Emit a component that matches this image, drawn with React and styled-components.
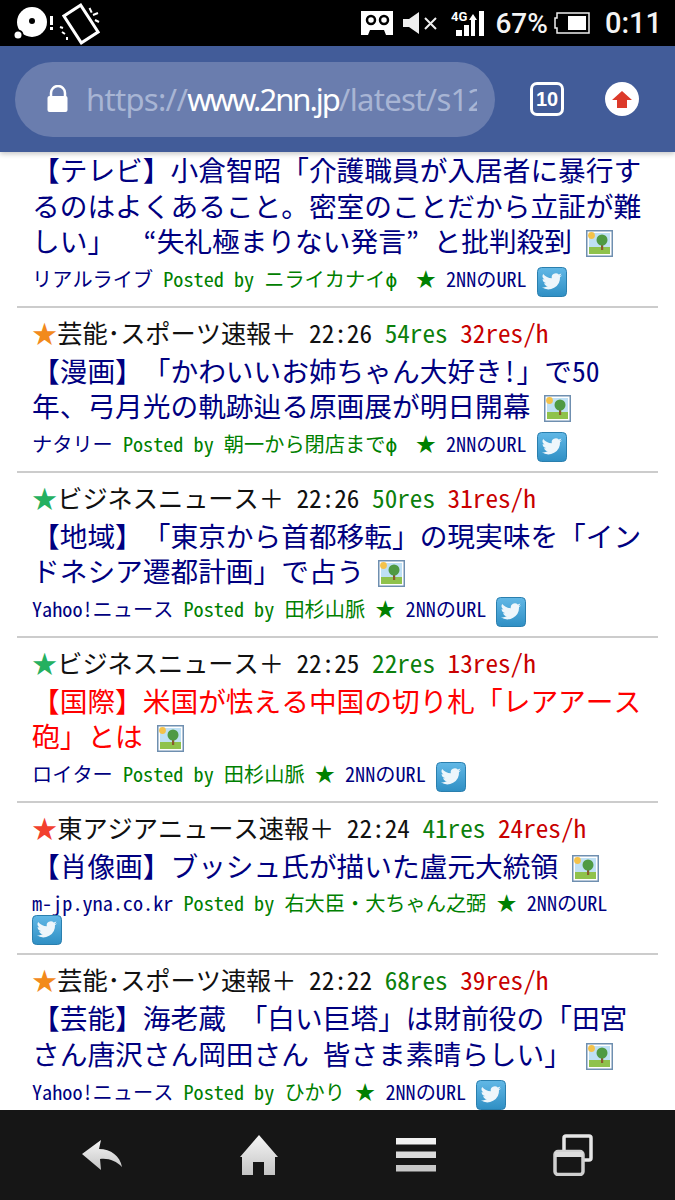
import React from "react";
import styled, { createGlobalStyle } from "styled-components";

const CJK = `"Noto Sans Mono CJK JP", "Noto Sans CJK JP", monospace`;

const GlobalStyle = createGlobalStyle`
  html, body { margin: 0; padding: 0; background: #fff; }
`;

const Phone = styled.div`
  width: 675px;
  height: 1200px;
  display: flex;
  flex-direction: column;
  overflow: hidden;
  font-family: ${CJK};
  text-spacing-trim: space-all;
`;

//------------------------------------------------------
const StatusBar = styled.div`
  height: 46px;
  flex: none;
  background: #000;
  color: #f4f4f4;
  display: flex;
  align-items: center;
  padding: 0 13px;
  font-family: Roboto, sans-serif;
  font-weight: 500;
`;
const StatusLeft = styled.div`
  display: flex;
  align-items: center;
  flex: 1;
`;
const StatusRight = styled.div`
  display: flex;
  align-items: center;
`;
const Percent = styled.span`
  font-size: 28px;
  margin: 0 6px 0 10px;
`;
const Clock = styled.span`
  font-size: 29px;
  margin-left: 15px;
`;

//------------------------------------------------------
const Toolbar = styled.div`
  height: 106px;
  flex: none;
  background: #425c99;
  display: flex;
  align-items: center;
  padding: 0 35px 0 15px;
  box-shadow: 0 2px 5px rgba(0, 0, 0, 0.22);
  position: relative;
  z-index: 1;
`;
const UrlPill = styled.div`
  width: 480px;
  height: 75px;
  border-radius: 38px;
  background: #6a7dae;
  display: flex;
  align-items: center;
  padding-left: 31px;
  box-sizing: border-box;
  margin-right: 35px;
`;
const UrlText = styled.div`
  width: 391px;
  margin-left: 16px;
  overflow: hidden;
  white-space: nowrap;
  font-family: "Noto Sans", sans-serif;
  font-size: 31px;
  letter-spacing: -0.7px;
  color: #a8b5d4;
`;
const UrlHost = styled.span`
  color: #fff;
  letter-spacing: -2px;
`;
const TabCount = styled.div`
  width: 28px;
  height: 28px;
  border: 3px solid #fff;
  border-radius: 7px;
  display: flex;
  align-items: center;
  justify-content: center;
  color: #fff;
  font-family: "Liberation Sans Narrow", "Liberation Sans", sans-serif;
  font-weight: bold;
  font-size: 20px;
  margin-right: 41px;
`;
const UploadBadge = styled.div`
  width: 34px;
  height: 34px;
  border-radius: 50%;
  background: #fff;
  display: flex;
  align-items: center;
  justify-content: center;
`;

//------------------------------------------------------
const List = styled.div`
  flex: 1;
  min-height: 0;
  overflow: hidden;
  padding: 0 17px;
`;
const Item = styled.div`
  padding: 9px 15px 8.8px;
  border-bottom: 2px solid #ccc;
  &:first-child {
    padding-top: 0;
  }
`;
const Head = styled.div`
  font-size: 25.2px;
  line-height: 30px;
  color: #111;
  white-space: pre;
  margin-bottom: 6px;
`;
const Star = styled.span`
  color: ${(p) => p.$color};
`;
const ResCount = styled.span`
  color: #0c800c;
`;
const ResRate = styled.span`
  color: #c80000;
`;
const Title = styled.div`
  font-size: 27.7px;
  line-height: 35.6px;
  color: ${(p) => (p.$hot ? "#ff0000" : "#000080")};
`;
const Meta = styled.div`
  font-size: 20.2px;
  line-height: 23.500px;
  margin-top: 8px;
  color: #000080;
`;
const Poster = styled.span`
  color: #008000;
`;
// these glyphs come out half width in the mono face, the page sets them in a full cell
const FullWidth = styled.span`
  display: inline-block;
  width: 1em;
  text-align: ${(p) => p.$align};
`;
const Thumb = styled.svg`
  width: 27px;
  height: 27px;
  margin-left: 14px;
  vertical-align: -5px;
`;
const BirdBox = styled.svg`
  width: 30px;
  height: 30px;
  margin-left: ${(p) => (p.$flush ? "0" : "10px")};
  vertical-align: middle;
`;

//------------------------------------------------------
const BottomBar = styled.div`
  height: 90px;
  flex: none;
  background: #161616;
  display: grid;
  grid-template-columns: repeat(4, 157px);
  justify-content: center;
  align-items: center;
  justify-items: center;
  position: relative;
  z-index: 1;
`;

const ImageIcon = () => (
  <Thumb viewBox="0 0 27 27">
    <rect x="0.75" y="0.75" width="25.5" height="25.5" fill="#fff" stroke="#6f8fb0" strokeWidth="1.5" />
    <rect x="3" y="3" width="21" height="21" fill="#bfe0f4" />
    <circle cx="5.500" cy="5.500" r="3.400" fill="#f4c24a" />
    <rect x="3" y="17" width="21" height="7" fill="#8fc24c" />
    <rect x="15" y="13" width="2.200" height="7" fill="#8a5a2c" />
    <circle cx="16" cy="10" r="5.500" fill="#4f9a43" />
  </Thumb>
);

const TwitterIcon = ({ flush }) => (
  <BirdBox $flush={flush} viewBox="0 0 30 30">
    <defs>
      <linearGradient id="bird-bg" x1="0" y1="0" x2="0" y2="1">
        <stop offset="0" stopColor="#62b8e6" />
        <stop offset="1" stopColor="#2f8fc4" />
      </linearGradient>
    </defs>
    <rect x="0.500" y="0.500" width="29" height="29" rx="4" fill="url(#bird-bg)" stroke="#2a7fae" />
    <path
      d="M25 8.200c-.8.400-1.600.600-2.400.700.900-.500 1.500-1.300 1.800-2.300-.8.500-1.700.800-2.600 1a4.100 4.100 0 0 0-7 3.700C11.400 11.100 8.300 9.500 6.200 7a4.100 4.100 0 0 0 1.300 5.500c-.7 0-1.300-.2-1.900-.5 0 2 1.400 3.700 3.300 4.100-.6.200-1.200.2-1.900.1.500 1.600 2 2.800 3.800 2.900A8.300 8.300 0 0 1 4.800 20.300 11.700 11.700 0 0 0 23 9.900c.8-.5 1.500-1.100 2-1.700z"
      fill="#eef6fb"
    />
  </BirdBox>
);

const Phi = () => <FullWidth $align="left">ϕ</FullWidth>;

const items = [
  {
    title: (
      <>
        【テレビ】小倉智昭「介護職員が入居者に暴行するのはよくあること。密室のことだから立証が難しい」{" "}
        <FullWidth $align="right">“</FullWidth>失礼極まりない発言<FullWidth $align="left">”</FullWidth>と批判殺到
      </>
    ),
    source: "リアルライブ",
    poster: "ニライカナイ",
    phi: true,
  },
  {
    star: "#f28a1c",
    board: "芸能･スポーツ速報＋ 22:26",
    res: "54res",
    rate: "32res/h",
    title: "【漫画】「かわいいお姉ちゃん大好き!」で50年、弓月光の軌跡辿る原画展が明日開幕",
    source: "ナタリー",
    poster: "朝一から閉店まで",
    phi: true,
  },
  {
    star: "#25b060",
    board: "ビジネスニュース＋ 22:26",
    res: "50res",
    rate: "31res/h",
    title: "【地域】「東京から首都移転」の現実味を「インドネシア遷都計画」で占う",
    source: "Yahoo!ニュース",
    poster: "田杉山脈",
  },
  {
    star: "#25b060",
    board: "ビジネスニュース＋ 22:25",
    res: "22res",
    rate: "13res/h",
    hot: true,
    title: "【国際】米国が怯える中国の切り札「レアアース砲」とは",
    source: "ロイター",
    poster: "田杉山脈",
  },
  {
    star: "#f2402e",
    board: "東アジアニュース速報＋ 22:24",
    res: "41res",
    rate: "24res/h",
    title: "【肖像画】ブッシュ氏が描いた盧元大統領",
    source: "m-jp.yna.co.kr",
    poster: "右大臣・大ちゃん之弼",
    wrap: true,
  },
  {
    star: "#f28a1c",
    board: "芸能･スポーツ速報＋ 22:22",
    res: "68res",
    rate: "39res/h",
    title: "【芸能】海老蔵 「白い巨塔」は財前役の「田宮さん唐沢さん岡田さん 皆さま素晴らしい」",
    source: "Yahoo!ニュース",
    poster: "ひかり",
  },
];

const App = () => {
  return (
    <Phone>
      <GlobalStyle />
      <StatusBar>
        <StatusLeft>
          {/* disc warning and screen rotation */}
          <svg width="90" height="46" viewBox="0 0 90 46">
            <circle cx="19" cy="22" r="15" fill="#fff" />
            <circle cx="19" cy="21" r="3" fill="#000" />
            <circle cx="5" cy="35" r="5.500" fill="#000" />
            <circle cx="5" cy="35" r="3.500" fill="#fff" />
            <rect x="37" y="16" width="3" height="9" fill="#fff" />
            <rect x="37" y="27" width="3" height="3" fill="#fff" />
            <rect x="58" y="8" width="20" height="32" fill="none" stroke="#fff" strokeWidth="3" transform="rotate(-33 68 24)" />
            <path d="M76.500 8l2.200 4.700M80 15l5-2M82 20l4 2M47 27l3 1M49 32l3 2M54 37v3" stroke="#fff" strokeWidth="2" />
          </svg>
        </StatusLeft>
        <StatusRight>
          <svg width="32" height="24" viewBox="0 0 32 24">
            <path d="M0 0h32v24H25l-2-5H9l-2 5H0z" fill="#fff" />
            <circle cx="10" cy="9" r="4" fill="none" stroke="#000" strokeWidth="2.500" />
            <circle cx="23" cy="9" r="4" fill="none" stroke="#000" strokeWidth="2.500" />
          </svg>
          <svg width="35" height="22" viewBox="0 0 35 22" style={{ marginLeft: 10 }}>
            <path d="M0 7h6l10-7v22L6 15H0z" fill="#eee" />
            <path d="M22 6l11 11M33 6L22 17" stroke="#eee" strokeWidth="2" />
          </svg>
          <svg width="34" height="26" viewBox="0 0 34 26" style={{ marginLeft: 13 }}>
            <text x="0" y="11" fill="#fff" fontSize="13" fontWeight="700" fontFamily="Roboto, sans-serif">4G</text>
            <rect x="5" y="20" width="6" height="6" fill="#fff" />
            <rect x="13" y="15" width="5" height="11" fill="#fff" />
            <path d="M20 26V10h-2l4-6 4 6h-2v16z" fill="#fff" />
            <rect x="28" y="1" width="5" height="25" fill="#fff" />
          </svg>
          <Percent>67%</Percent>
          <svg width="36" height="22" viewBox="0 0 36 22">
            <path d="M1 6h2V1h32v20H3v-5H1z" fill="none" stroke="#eee" strokeWidth="1.500" />
            <rect x="14" y="4" width="18" height="14" fill="#fff" />
          </svg>
          <Clock>0:11</Clock>
        </StatusRight>
      </StatusBar>

      <Toolbar>
        <UrlPill>
          <svg width="24" height="28" viewBox="0 0 24 28">
            <path d="M5 12V8a6.500 6.500 0 0 1 14 0v4" fill="none" stroke="#fff" strokeWidth="2.500" />
            <rect x="1.500" y="11" width="20" height="16" rx="2" fill="#fff" />
          </svg>
          <UrlText>
            https://<UrlHost>www.2nn.jp</UrlHost>/latest/s12
          </UrlText>
        </UrlPill>
        <TabCount>10</TabCount>
        <UploadBadge>
          <svg width="20" height="17" viewBox="0 0 20 17">
            <path d="M10 0l10 9h-5v8H5V9H0z" fill="#dc3a2a" />
          </svg>
        </UploadBadge>
      </Toolbar>

      <List>
        {items.map((item, i) => (
          <Item key={i}>
            {item.board && (
              <Head>
                <Star $color={item.star}>★</Star>
                {item.board} <ResCount>{item.res}</ResCount> <ResRate>{item.rate}</ResRate>
              </Head>
            )}
            <Title $hot={item.hot}>
              {item.title}
              <ImageIcon />
            </Title>
            <Meta>
              {item.source}{" "}
              <Poster>
                Posted by {item.poster}
                {item.phi && <Phi />} ★{" "}
              </Poster>
              2NNのURL
              {item.wrap ? <br /> : null}
              <TwitterIcon flush={item.wrap} />
            </Meta>
          </Item>
        ))}
      </List>

      <BottomBar>
        <svg width="40" height="30" viewBox="0 0 40 30">
          <defs>
            <linearGradient id="nav-grey" x1="0" y1="0" x2="0" y2="1">
              <stop offset="0" stopColor="#f6f6f6" />
              <stop offset="1" stopColor="#c4c4c4" />
            </linearGradient>
          </defs>
          <path d="M0 14L19 0l-2 9c12 0 21 7 23 18-6-6-13-9-22-8l1 11z" fill="url(#nav-grey)" />
        </svg>
        <svg width="38" height="40" viewBox="0 0 38 40">
          <path d="M19 0l19 22h-3v18H24V27H13v13H2V22H0z" fill="url(#nav-grey)" />
        </svg>
        <svg width="40" height="34" viewBox="0 0 40 34">
          <rect y="0" width="40" height="6.500" fill="#f2f2f2" />
          <rect y="13.500" width="40" height="6.500" fill="#dcdcdc" />
          <rect y="27" width="40" height="6.500" fill="#c8c8c8" />
        </svg>
        <svg width="40" height="42" viewBox="0 0 40 42">
          <path d="M11 16V4a2 2 0 0 1 2-2h23a2 2 0 0 1 2 2v20a2 2 0 0 1-2 2h-5" fill="none" stroke="#e6e6e6" strokeWidth="3.500" />
          <rect x="2" y="17.500" width="28" height="23" rx="3" fill="#161616" stroke="#cfcfcf" strokeWidth="3.500" />
          <rect x="2" y="18" width="28" height="5" fill="#dcdcdc" />
        </svg>
      </BottomBar>
    </Phone>
  );
};

export default App;
